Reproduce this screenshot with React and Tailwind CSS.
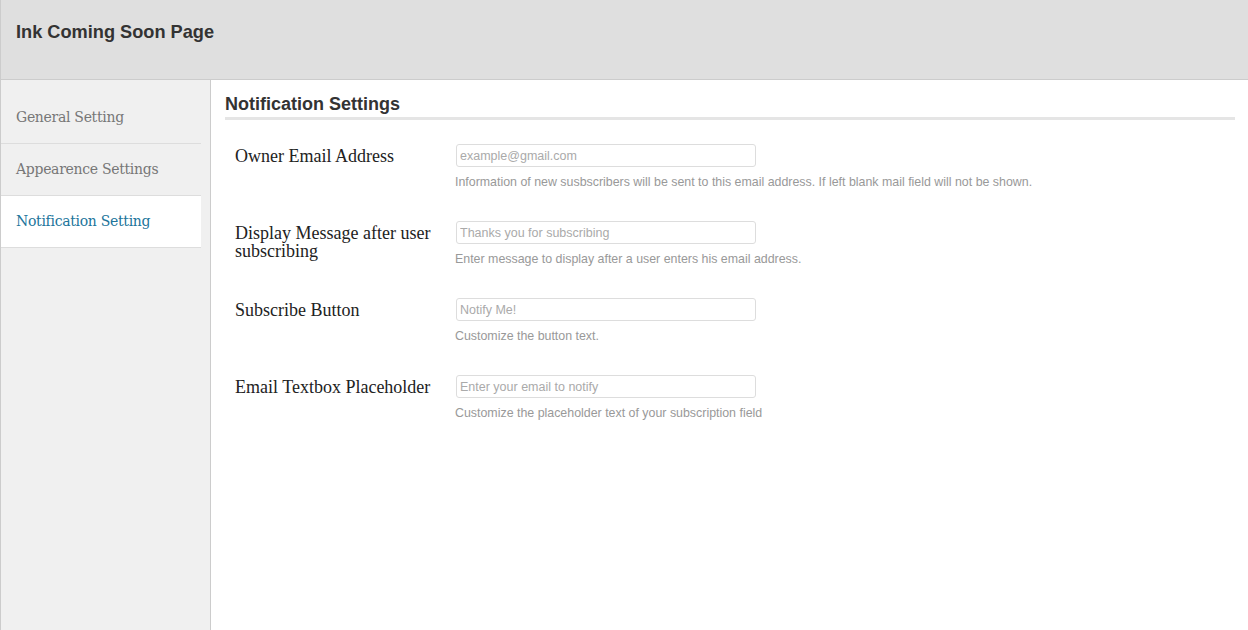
import React from "react";

const tabs = [
  { label: "General Setting" },
  { label: "Appearence Settings" },
  { label: "Notification Setting", active: true },
];

const fields = [
  {
    label: "Owner Email Address",
    placeholder: "example@gmail.com",
    help: "Information of new susbscribers will be sent to this email address. If left blank mail field will not be shown.",
  },
  {
    label: "Display Message after user subscribing",
    placeholder: "Thanks you for subscribing",
    help: "Enter message to display after a user enters his email address.",
  },
  {
    label: "Subscribe Button",
    placeholder: "Notify Me!",
    help: "Customize the button text.",
  },
  {
    label: "Email Textbox Placeholder",
    placeholder: "Enter your email to notify",
    help: "Customize the placeholder text of your subscription field",
  },
];

export default function App() {
  return (
    <div className="flex flex-col h-screen bg-white font-['Liberation_Sans',Arial,sans-serif]">
      <header className="h-[80px] shrink-0 bg-[#dfdfdf] border-l border-b border-[#cccccc] px-[15px] pt-[20px]">
        <h1 className="text-[18.2px] leading-[24px] font-bold text-[#333333]">Ink Coming Soon Page</h1>
      </header>

      <div className="flex flex-1 min-h-0">
        <aside className="w-[211px] shrink-0 bg-[#f0f0f0] border-l border-r border-[#cccccc] pt-[12px]">
          <ul className="w-[200px]">
            {tabs.map((t) => (
              <li
                key={t.label}
                className={
                  "h-[52px] flex items-center px-[15px] border-b border-[#dddddd] text-[14px] font-['DejaVu_Serif',Georgia,serif] tracking-[-0.3px] " +
                  (t.active ? "bg-white text-[#21759b]" : "text-[#777777]")
                }
              >
                {t.label}
              </li>
            ))}
          </ul>
        </aside>

        <main className="flex-1 pl-[14px] pr-[13px] pt-[12px]">
          <h2 className="text-[18px] leading-[24px] font-bold text-[#333333] border-b-[3px] border-[#e5e5e5] pb-[1px]">
            Notification Settings
          </h2>

          <div className="pl-[10px] pt-[24px] flex flex-col gap-[32px]">
            {fields.map((f) => (
              <div key={f.label} className="flex">
                <label className="w-[221px] shrink-0 pr-[4px] text-[18px] leading-[18px] text-[#222222] font-['Liberation_Serif','Times_New_Roman',serif] pt-[3px]">
                  {f.label}
                </label>
                <div className="flex flex-col">
                  <input
                    type="text"
                    placeholder={f.placeholder}
                    className="w-[300px] h-[23px] border border-[#dddddd] rounded-[3px] px-[3px] text-[12.5px] text-[#333333] placeholder:text-[#aaaaaa] outline-none"
                  />
                  <p className="mt-[8px] -ml-[1px] text-[12.4px] leading-[14px] text-[#999999]">{f.help}</p>
                </div>
              </div>
            ))}
          </div>
        </main>
      </div>
    </div>
  );
}
